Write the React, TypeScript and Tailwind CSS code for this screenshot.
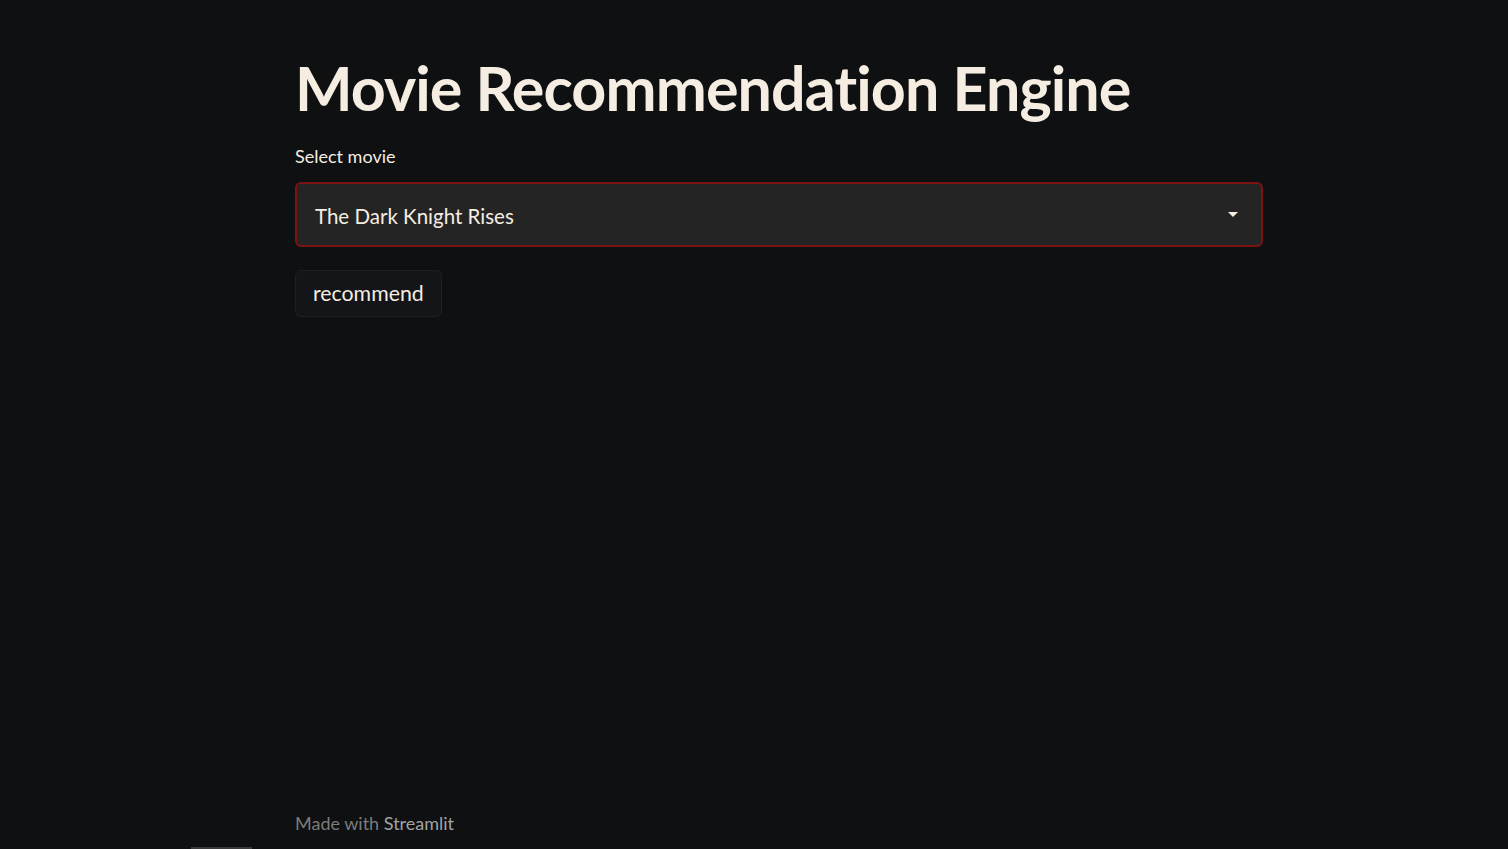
import React from "react";

export default function App() {
  const font = { fontFamily: "Lato, 'Noto Sans', sans-serif" };
  return (
    <div className="w-[1508px] h-[849px] bg-[#0e1012] relative overflow-hidden" style={font}>
      <div className="w-[968px] ml-[295px] pt-[50px] flex flex-col">
        <h1 className="text-[61px] leading-[76px] font-bold text-[#f5ede2] tracking-[-0.9px]">Movie Recommendation Engine</h1>
        <div className="mt-[18px] text-[18px] leading-[24px] text-[#f5ede2]">Select movie</div>
        <div className="mt-[14px] h-[65px] rounded-[6px] border-2 border-[#7c1414] bg-[#242424] flex items-center justify-between pl-[18px] pr-[22px] pt-[3px]">
          <span className="text-[20.5px] text-[#f5ede2]">The Dark Knight Rises</span>
          <svg width="12" height="6" viewBox="0 0 12 6" className="-mt-[2px]"><path d="M1 0h10L6 5z" fill="#f5ede2" /></svg>
        </div>
        <div className="mt-[23px]">
          <button className="h-[47px] px-[17px] pt-[1px] rounded-[6px] border border-[#1e2024] bg-[#131518] text-[21.3px] text-[#f5ede2]">recommend</button>
        </div>
      </div>
      <div className="absolute left-[295px] top-[811px] text-[18px] leading-[24px] text-[#7c7c7c]">
        Made with <span className="text-[#a3a3a3]">Streamlit</span>
      </div>
      <div className="absolute left-[191px] bottom-0 w-[61px] h-[2px] bg-[#3a3a3a]" />
    </div>
  );
}
